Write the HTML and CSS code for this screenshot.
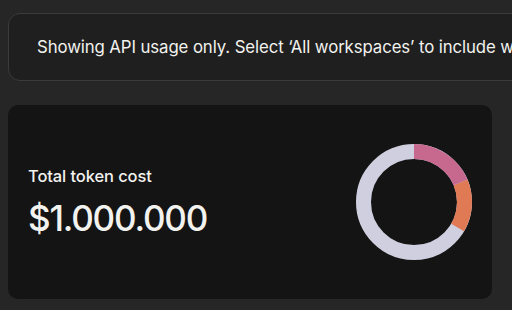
FILE: index.html
```html
<!DOCTYPE html>
<html lang="en">
<head>
  <meta charset="UTF-8">
  <meta name="viewport" content="width=device-width, initial-scale=1.0">
  <title>Usage</title>
  <link rel="stylesheet" href="styles.css">
</head>
<body>
  <!-- Aviso sobre o escopo -->
  <div class="notice">
    <p>Showing API usage only. Select ‘All workspaces’ to include workbench usage.</p>
  </div>

  <!-- Cartão de custo total -->
  <div class="card">
    <div class="card-text">
      <div class="label">Total token cost</div>
      <div class="amount">$1.000.000</div>
    </div>
    <svg class="donut" width="118" height="118" viewBox="0 0 118 118">
      <!-- anel de fundo -->
      <circle cx="59" cy="59" r="50.5" fill="none" stroke="#cfcfe0" stroke-width="15"/>
      <!-- segmentos: comprimento total = 2*pi*50.5 = 317.3 -->
      <circle cx="59" cy="59" r="50.5" fill="none" stroke="#e07a55" stroke-width="15"
              stroke-dasharray="0 59 46.9 317.3" transform="rotate(-90 59 59)"/>
      <circle cx="59" cy="59" r="50.5" fill="none" stroke="#c7698f" stroke-width="15"
              stroke-dasharray="59 317.3" transform="rotate(-90 59 59)"/>
    </svg>
  </div>
</body>
</html>
```

FILE: styles.css
```css
/* Layout geral */
body {
  margin: 0;
  padding: 13px 0 0 8px;
  background-color: #262626;
  font-family: Inter, "Noto Sans", sans-serif;
  color: #f2f2ee;
  overflow: hidden;
}

/* Faixa de aviso */
.notice {
  width: 600px;
  height: 66px;
  display: flex;
  align-items: center;
  padding-left: 28px;
  background-color: #1f1f1f;
  border: 1px solid #3b3b3b;
  border-radius: 12px;
  white-space: nowrap;
}

.notice p {
  margin: 0;
  font-size: 16.8px;
  letter-spacing: -0.1px;
}

/* Cartão */
.card {
  margin-top: 24px;
  width: 484px;
  height: 194px;
  box-sizing: border-box;
  display: flex;
  align-items: center;
  justify-content: space-between;
  padding: 0 19px 0 20px;
  background-color: #141414;
  border-radius: 10px;
}

.card-text {
  margin-top: -1px;
}

.label {
  font-size: 16.5px;
  font-weight: 500;
  letter-spacing: -0.1px;
}

.amount {
  margin-top: 12px;
  font-size: 35px;
  line-height: 40px;
  font-weight: 500;
  letter-spacing: -1.2px;
}

.donut {
  display: block;
  margin-top: 0;
}
```
